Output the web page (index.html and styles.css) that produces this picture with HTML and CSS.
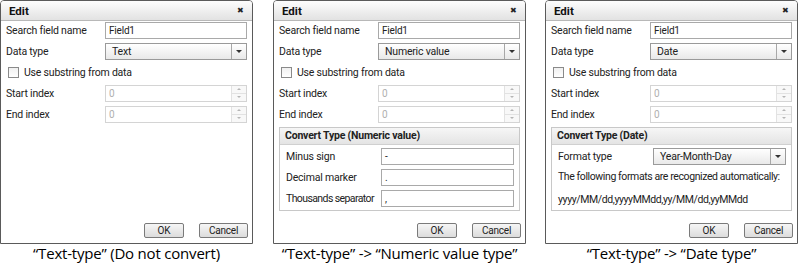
FILE: index.html
```html
<!DOCTYPE html>
<html>
<head>
    <meta charset="utf-8"/>
    <title>Edit dialogs</title>
    <link rel="stylesheet" href="styles.css">
</head>
<body>
<div class="figure">

    <!-- text type -->
    <div class="panel">
        <div class="dialog">
            <div class="titlebar"><span class="title">Edit</span><span class="close">&#x2716;</span></div>
            <div class="body">
                <div class="row"><span class="label">Search field name</span><div class="field">Field1</div></div>
                <div class="row"><span class="label">Data type</span><div class="select"><span class="value">Text</span><span class="arrow"></span></div></div>
                <div class="row check-row"><span class="checkbox"></span><span>Use substring from data</span></div>
                <div class="row"><span class="label">Start index</span><div class="field spin disabled">0<span class="spinner"><i class="up"></i><i class="down"></i></span></div></div>
                <div class="row"><span class="label">End index</span><div class="field spin disabled">0<span class="spinner"><i class="up"></i><i class="down"></i></span></div></div>
            </div>
            <div class="footer"><span class="btn">OK</span><span class="btn cancel">Cancel</span></div>
        </div>
        <div class="caption">&ldquo;Text-type&rdquo; (Do not convert)</div>
    </div>

    <!-- numeric -->
    <div class="panel">
        <div class="dialog">
            <div class="titlebar"><span class="title">Edit</span><span class="close">&#x2716;</span></div>
            <div class="body">
                <div class="row"><span class="label">Search field name</span><div class="field">Field1</div></div>
                <div class="row"><span class="label">Data type</span><div class="select"><span class="value">Numeric value</span><span class="arrow"></span></div></div>
                <div class="row check-row"><span class="checkbox"></span><span>Use substring from data</span></div>
                <div class="row"><span class="label">Start index</span><div class="field spin disabled">0<span class="spinner"><i class="up"></i><i class="down"></i></span></div></div>
                <div class="row"><span class="label">End index</span><div class="field spin disabled">0<span class="spinner"><i class="up"></i><i class="down"></i></span></div></div>
                <div class="group numeric">
                    <div class="group-head">Convert Type (Numeric value)</div>
                    <div class="group-body">
                        <div class="row"><span class="label">Minus sign</span><div class="field">-</div></div>
                        <div class="row"><span class="label">Decimal marker</span><div class="field">.</div></div>
                        <div class="row"><span class="label tight">Thousands separator</span><div class="field">,</div></div>
                    </div>
                </div>
            </div>
            <div class="footer"><span class="btn">OK</span><span class="btn cancel">Cancel</span></div>
        </div>
        <div class="caption">&ldquo;Text-type&rdquo; -&gt; &ldquo;Numeric value type&rdquo;</div>
    </div>

    <!-- date -->
    <div class="panel">
        <div class="dialog">
            <div class="titlebar"><span class="title">Edit</span><span class="close">&#x2716;</span></div>
            <div class="body">
                <div class="row"><span class="label">Search field name</span><div class="field">Field1</div></div>
                <div class="row"><span class="label">Data type</span><div class="select"><span class="value">Date</span><span class="arrow"></span></div></div>
                <div class="row check-row"><span class="checkbox"></span><span>Use substring from data</span></div>
                <div class="row"><span class="label">Start index</span><div class="field spin disabled">0<span class="spinner"><i class="up"></i><i class="down"></i></span></div></div>
                <div class="row"><span class="label">End index</span><div class="field spin disabled">0<span class="spinner"><i class="up"></i><i class="down"></i></span></div></div>
                <div class="group date">
                    <div class="group-head">Convert Type (Date)</div>
                    <div class="group-body">
                        <div class="row"><span class="label">Format type</span><div class="select"><span class="value">Year-Month-Day</span><span class="arrow"></span></div></div>
                        <div class="note">The following formats are recognized automatically:</div>
                        <div class="note">yyyy/MM/dd,yyyyMMdd,yy/MM/dd,yyMMdd</div>
                    </div>
                </div>
            </div>
            <div class="footer"><span class="btn">OK</span><span class="btn cancel">Cancel</span></div>
        </div>
        <div class="caption">&ldquo;Text-type&rdquo; -&gt; &ldquo;Date type&rdquo;</div>
    </div>

</div>
</body>
</html>
```

FILE: styles.css
```css
html,
body {
    margin: 0;
    padding: 0;
    background: #fff;
}

.figure {
    display: flex;
    gap: 20px;
    width: 801px;
    font-family: Roboto, "Liberation Sans", sans-serif;
    font-size: 10.5px;
    letter-spacing: -0.2px;
    color: #222;
}

.panel {
    width: 253px;
    display: flex;
    flex-direction: column;
}

.panel:last-child {
    margin-left: -1px;
}

.dialog {
    height: 244px;
    box-sizing: border-box;
    border: 1px solid #5a5a5a;
    border-radius: 4px 4px 0 0;
    display: flex;
    flex-direction: column;
    background: #fff;
}

.titlebar {
    height: 20px;
    box-sizing: border-box;
    display: flex;
    align-items: center;
    justify-content: space-between;
    padding: 0 8px 0 8px;
    border-bottom: 1px solid #b8b8b8;
    border-radius: 3px 3px 0 0;
    background: linear-gradient(to bottom, #fdfdfd, #e2e2e2);
}

.titlebar .title {
    font-weight: bold;
    font-size: 11.5px;
    letter-spacing: 0;
    color: #111;
}

.titlebar .close {
    font-size: 8px;
    color: #222;
}

.body {
    padding: 1px 5px 0 5px;
    display: flex;
    flex-direction: column;
    gap: 4px;
}

.row {
    display: flex;
    align-items: center;
    height: 17px;
    white-space: nowrap;
}

.row .label {
    width: 99px;
    flex: none;
}

.field {
    flex: 1;
    height: 17px;
    box-sizing: border-box;
    border: 1px solid #a9a9a9;
    padding: 0 3px;
    line-height: 15px;
    font-size: 10px;
    display: flex;
    align-items: center;
}

.field.disabled {
    border-color: #d4d4d4;
    color: #b0b0b0;
}

.spin {
    position: relative;
    padding-right: 16px;
}

.spinner {
    position: absolute;
    right: 0;
    top: 0;
    bottom: 0;
    width: 14px;
    border-left: 1px solid #e2e2e2;
    display: flex;
    flex-direction: column;
    background: #f8f8f8;
}

.spinner i {
    flex: 1;
    position: relative;
}

.spinner i + i {
    border-top: 1px solid #e2e2e2;
}

.spinner i::after {
    content: "";
    position: absolute;
    left: 5px;
    top: 2px;
    border-left: 2px solid transparent;
    border-right: 2px solid transparent;
}

.spinner .up::after {
    border-bottom: 2px solid #b5b5b5;
}

.spinner .down::after {
    border-top: 2px solid #b5b5b5;
}

.select {
    flex: 1;
    height: 17px;
    box-sizing: border-box;
    border: 1px solid #9a9a9a;
    display: flex;
    background: linear-gradient(to bottom, #ffffff, #e9e9e9);
}

.select .value {
    flex: 1;
    padding: 0 6px;
    line-height: 15px;
    font-size: 10.5px;
}

.select .arrow {
    width: 14px;
    border-left: 1px solid #a8a8a8;
    position: relative;
}

.select .arrow::after {
    content: "";
    position: absolute;
    left: 4px;
    top: 6px;
    border-left: 3px solid transparent;
    border-right: 3px solid transparent;
    border-top: 3px solid #333;
}

.check-row {
    gap: 5px;
    padding-left: 2px;
}

.checkbox {
    width: 9px;
    height: 9px;
    border: 1px solid #8a8a8a;
    background: linear-gradient(to bottom, #f0f0f0, #ffffff);
}

.group {
    border: 1px solid #c8c8c8;
}

.group-head {
    height: 16px;
    line-height: 16px;
    padding-left: 5px;
    font-weight: bold;
    border-bottom: 1px solid #d0d0d0;
    background: linear-gradient(to bottom, #f6f6f6, #e4e4e4);
}

.group-body {
    padding: 3px 5px 3px 6px;
    display: flex;
    flex-direction: column;
    gap: 4px;
}

.group .row .label {
    width: 95px;
}

.group .row .label.tight {
    letter-spacing: -0.6px;
}

.note {
    height: 15px;
    line-height: 15px;
    white-space: nowrap;
    letter-spacing: -0.4px;
}

.note + .note {
    margin-top: 4px;
}

.footer {
    margin-top: auto;
    display: flex;
    justify-content: flex-end;
    gap: 15px;
    padding: 0 4px 5px 0;
}

.btn {
    width: 40px;
    height: 15px;
    box-sizing: border-box;
    border: 1px solid #7a7a7a;
    border-radius: 2px;
    background: linear-gradient(to bottom, #f6f6f6, #dcdcdc);
    text-align: center;
    line-height: 13px;
    font-size: 10px;
}

.btn.cancel {
    width: 49px;
}

.caption {
    text-align: center;
    font-family: "Open Sans", "Liberation Sans", sans-serif;
    font-size: 15px;
    line-height: 19px;
    color: #000;
}
```
